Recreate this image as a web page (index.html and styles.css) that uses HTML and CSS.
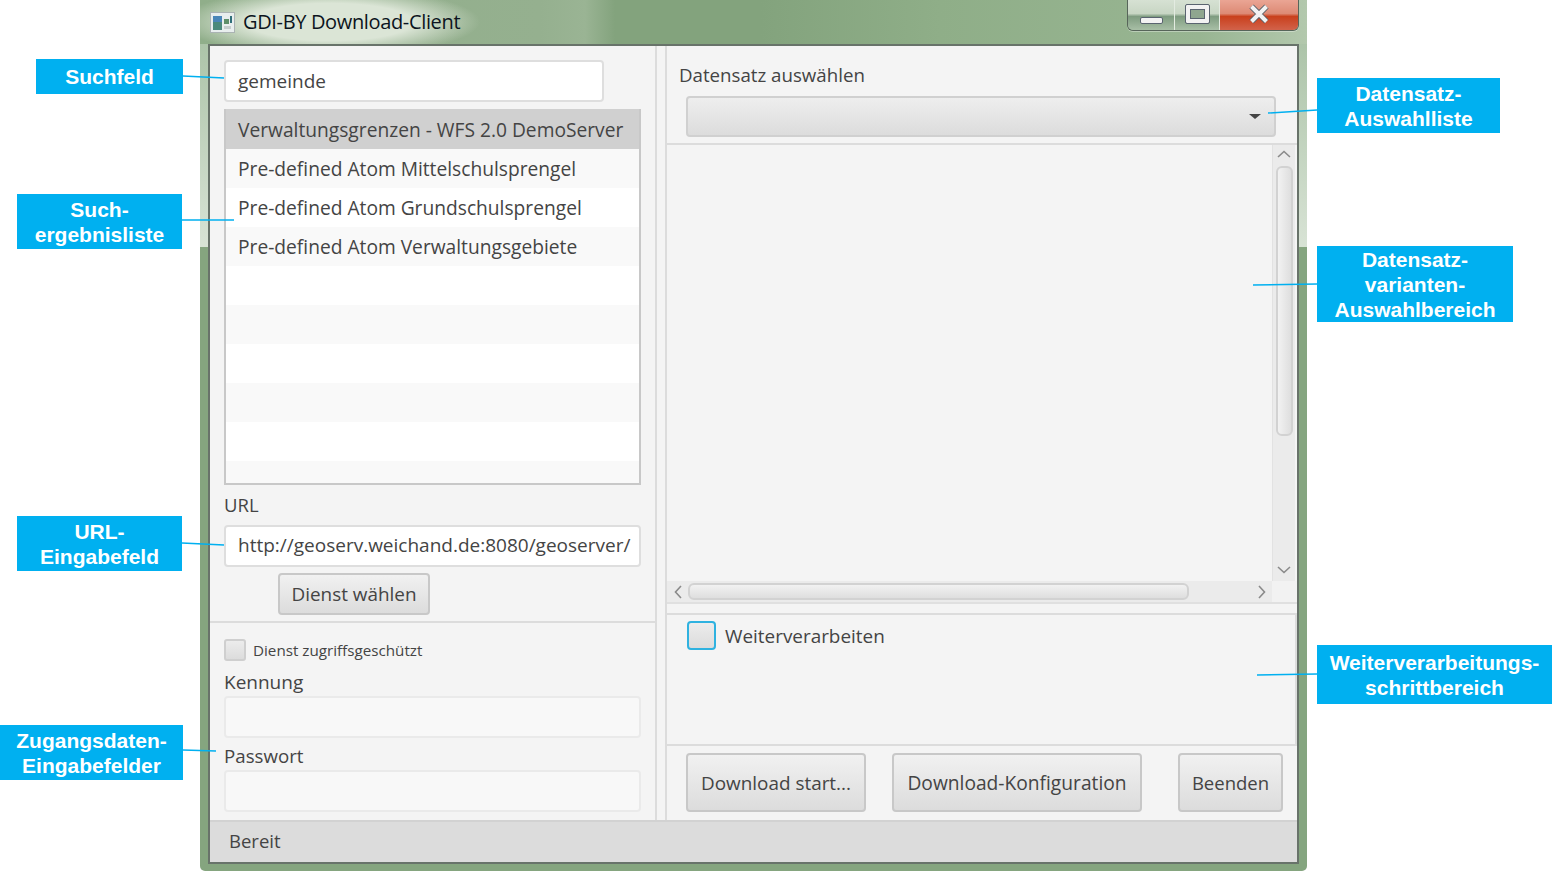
FILE: index.html
```html
<!DOCTYPE html>
<html lang="de">
<head>
  <meta charset="UTF-8">
  <title>GDI-BY Download-Client</title>
  <link rel="stylesheet" href="styles.css">
</head>
<body>

<div class="window">
  <div class="titlebar">
    <svg class="app-icon" width="25" height="21" viewBox="0 0 25 21">
      <rect x="0.5" y="0.5" width="24" height="20" fill="#e8eeee" stroke="#aab3b3"/>
      <rect x="3" y="4" width="9" height="14" fill="#4a8a7c"/>
      <rect x="3" y="4" width="9" height="6" fill="#4a86b8"/>
      <rect x="14" y="7" width="5" height="5" fill="#5d8f6a"/>
      <rect x="14" y="14" width="7" height="3" fill="#c4cdcd"/>
      <rect x="20" y="4" width="2" height="7" fill="#2f6f7a"/>
    </svg>
    <span class="title">GDI-BY Download-Client</span>
    <div class="caption-buttons">
      <div class="cap cap-min"><span class="min-glyph"></span></div>
      <div class="cap cap-max"><span class="max-glyph"></span></div>
      <div class="cap cap-close">
        <svg class="close-glyph" width="24" height="20" viewBox="0 0 24 20">
          <path d="M4.5 2.5 L12 10 L4.5 17.5 M19.5 2.5 L12 10 L19.5 17.5" fill="none" stroke="#5a6068" stroke-width="6"/>
          <path d="M4.5 2.5 L12 10 L4.5 17.5 M19.5 2.5 L12 10 L19.5 17.5" fill="none" stroke="#f2f2f2" stroke-width="4"/>
        </svg>
      </div>
    </div>
  </div>

  <div class="frame">
    <div class="panes">
      <div class="left-pane">
        <div class="left-top">
          <div class="field search-field">gemeinde</div>
          <div class="result-list">
            <div class="row selected">Verwaltungsgrenzen - WFS 2.0 DemoServer</div>
            <div class="row odd">Pre-defined Atom Mittelschulsprengel</div>
            <div class="row">Pre-defined Atom Grundschulsprengel</div>
            <div class="row odd">Pre-defined Atom Verwaltungsgebiete</div>
            <div class="row"></div>
            <div class="row odd"></div>
            <div class="row"></div>
            <div class="row odd"></div>
            <div class="row"></div>
            <div class="row odd"></div>
          </div>
          <div class="label url-label">URL</div>
          <div class="field url-field">http://geoserv.weichand.de:8080/geoserver/</div>
          <div class="btn service-btn">Dienst wählen</div>
        </div>
        <div class="left-bottom">
          <div class="check-row">
            <span class="check small"></span>
            <span class="check-label-small">Dienst zugriffsgeschützt</span>
          </div>
          <div class="label kennung-label">Kennung</div>
          <div class="field disabled"></div>
          <div class="label passwort-label">Passwort</div>
          <div class="field disabled"></div>
        </div>
      </div>

      <div class="pane-divider"></div>

      <div class="right-pane">
        <div class="label dataset-label">Datensatz auswählen</div>
        <div class="combo"><span class="combo-arrow"></span></div>
        <div class="scroll-pane">
          <div class="scroll-main">
            <div class="scroll-content"></div>
            <div class="vscroll">
              <svg class="arrow" width="14" height="8" viewBox="0 0 14 8"><path d="M1 7 L7 1.5 L13 7" fill="none" stroke="#8a8a8a" stroke-width="1.6"/></svg>
              <div class="vthumb"></div>
              <svg class="arrow arrow-end" width="14" height="8" viewBox="0 0 14 8"><path d="M1 1 L7 6.5 L13 1" fill="none" stroke="#8a8a8a" stroke-width="1.6"/></svg>
            </div>
          </div>
          <div class="hscroll">
            <svg class="arrow" width="8" height="14" viewBox="0 0 8 14"><path d="M7 1 L1.5 7 L7 13" fill="none" stroke="#8a8a8a" stroke-width="1.6"/></svg>
            <div class="hthumb"></div>
            <svg class="arrow arrow-right" width="8" height="14" viewBox="0 0 8 14"><path d="M1 1 L6.5 7 L1 13" fill="none" stroke="#8a8a8a" stroke-width="1.6"/></svg>
            <div class="corner"></div>
          </div>
        </div>
        <div class="h-divider"></div>
        <div class="process-pane">
          <span class="check focused"></span>
          <span class="process-label">Weiterverarbeiten</span>
        </div>
        <div class="actions">
          <div class="btn start-btn">Download start...</div>
          <div class="btn config-btn">Download-Konfiguration</div>
          <div class="btn quit-btn">Beenden</div>
        </div>
      </div>
    </div>
    <div class="statusbar">Bereit</div>
  </div>
</div>

<!-- annotations on top of the screenshot -->
<svg class="leaders" width="1554" height="871" viewBox="0 0 1554 871">
  <path d="M183 76 L224 78 M182 220 L234 220 M182 543 L224 545 M183 750 L216 751 M1268 113 L1317 110 M1253 285 L1317 284 M1257 675 L1317 674" stroke="#00b0f0" stroke-width="1.5" fill="none"/>
</svg>
<div class="callout c-suchfeld">Suchfeld</div>
<div class="callout c-liste">Such-<br>ergebnisliste</div>
<div class="callout c-url">URL-<br>Eingabefeld</div>
<div class="callout c-zugang">Zugangsdaten-<br>Eingabefelder</div>
<div class="callout c-auswahl">Datensatz-<br>Auswahlliste</div>
<div class="callout c-varianten">Datensatz-<br>varianten-<br>Auswahlbereich</div>
<div class="callout c-schritt">Weiterverarbeitungs-<br>schrittbereich</div>

</body>
</html>
```

FILE: styles.css
```css
* {
  box-sizing: border-box;
}
html, body {
  margin: 0;
  height: 871px;
  overflow: hidden;
}
body {
  position: relative;
  padding-left: 200px;
  background: #fff;
  font-family: "Open Sans", sans-serif;
  font-size: 18.9px;
  color: #444;
}

/* window */
.window {
  width: 1107px;
  height: 871px;
  padding: 0 8px 7px;
  border-radius: 0 0 5px 5px;
  display: flex;
  flex-direction: column;
  background: linear-gradient(to bottom, #a3bd9f, #d8e3d5) no-repeat 0 0 / 100% 247px, #85a57f;
}
.titlebar {
  height: 44px;
  flex: none;
  margin: 0 -8px;
  padding: 0 8px;
  display: flex;
  align-items: flex-start;
  background:
    radial-gradient(ellipse 150px 34px at 130px 22px, #dbe5d6 55%, rgba(219,229,214,0) 100%),
    linear-gradient(to right, #90ae8a 0, #95b08f 340px, #9ab494 385px, #83a37d 415px, #83a37d 560px, #8fae88 740px, #98b592 1000px, #b3c8ad 1107px);
}
.app-icon {
  margin: 12px 8px 0 2px;
}
.title {
  margin-top: 8px;
  font-size: 20px;
  color: #0c1420;
  letter-spacing: -0.35px;
}
.caption-buttons {
  display: flex;
  margin-left: auto;
  height: 31px;
  border: 1px solid #57655a;
  border-top: none;
  border-radius: 0 0 6px 6px;
  overflow: hidden;
  box-shadow: 0 1px 0 rgba(255,255,255,0.35);
}
.cap {
  display: flex;
  align-items: center;
  justify-content: center;
  background: linear-gradient(to bottom, #d6e1d3 0, #c8d6c4 45%, #7f9c80 55%, #a8bfa6 100%);
}
.cap-min {
  width: 47px;
  border-right: 1px solid #e3ebe1;
}
.cap-max {
  width: 45px;
  border-right: 1px solid #e3ebe1;
}
.cap-close {
  width: 78px;
  background: linear-gradient(to bottom, #eaa594 0, #dd8a75 45%, #c9401d 55%, #d2624a 100%);
}
.min-glyph {
  width: 23px;
  height: 7px;
  margin-top: 10px;
  background: #f2f2f2;
  border: 1px solid #5a6470;
  border-radius: 2px;
}
.max-glyph {
  width: 23px;
  height: 18px;
  margin-top: -2px;
  background: #8fa68f;
  border: 4px solid #f2f2f2;
  outline: 1px solid #5a6470;
  box-shadow: inset 0 0 0 1px #5a6470;
  border-radius: 1px;
}
.close-glyph {
  margin-top: -2px;
}
.frame {
  flex: 1;
  display: flex;
  flex-direction: column;
  border: 2px solid #68736a;
  background: #f4f4f4;
  min-height: 0;
}
.panes {
  flex: 1;
  display: flex;
  min-height: 0;
}

/* left side */
.left-pane {
  width: 445px;
  flex: none;
}
.left-top {
  height: 577px;
  padding: 14px 14px 0;
  border-bottom: 2px solid #dcdcdc;
}
.field {
  height: 42px;
  padding: 0 12px;
  display: flex;
  align-items: center;
  background: #fff;
  border: 2px solid #dedede;
  border-radius: 4px;
  white-space: nowrap;
  overflow: hidden;
}
.search-field {
  width: 380px;
  font-size: 19px;
}
.result-list {
  height: 376px;
  margin-top: 7px;
  border: 2px solid #c8c8c8;
  border-top: none;
  overflow: hidden;
  background: #fff;
}
.row {
  height: 39px;
  padding: 0 12px;
  line-height: 40px;
  font-size: 19.2px;
  white-space: nowrap;
  background: #fff;
}
.row.odd {
  background: #f9f9f9;
}
.row.selected {
  height: 40px;
  line-height: 41px;
  background: #d0d0d0;
}
.label {
  line-height: 26px;
}
.url-label {
  margin-top: 7px;
  font-size: 18.5px;
}
.url-field {
  margin-top: 7px;
  padding-bottom: 2px;
  font-size: 19px;
}
.btn {
  display: flex;
  align-items: center;
  justify-content: center;
  border: 2px solid #c8c8c8;
  border-radius: 4px;
  background: linear-gradient(to bottom, #f1f1f1, #dcdcdc);
  white-space: nowrap;
}
.service-btn {
  width: 152px;
  height: 42px;
  margin: 6px 0 0 54px;
}
.left-bottom {
  padding: 16px 14px 0;
}
.check-row {
  display: flex;
  align-items: center;
  gap: 7px;
}
.check {
  display: block;
  flex: none;
  border-radius: 3px;
  background: linear-gradient(to bottom, #ececec, #dcdcdc);
}
.check.small {
  width: 22px;
  height: 22px;
  border: 2px solid #cfcfcf;
}
.check-label-small {
  font-size: 15.2px;
}
.kennung-label {
  margin-top: 8px;
  font-size: 19px;
}
.passwort-label {
  margin-top: 5px;
  font-size: 18.7px;
}
.field.disabled {
  margin-top: 1px;
  background: #f8f8f8;
  border-color: #eaeaea;
}

/* divider between the panes */
.pane-divider {
  width: 12px;
  flex: none;
  background: #f4f4f4;
  border-left: 2px solid #dcdcdc;
  border-right: 2px solid #dcdcdc;
}

/* right side */
.right-pane {
  flex: 1;
  min-width: 0;
  display: flex;
  flex-direction: column;
}
.dataset-label {
  margin: 16px 0 0 12px;
  height: 34px;
  font-size: 18.7px;
}
.combo {
  width: 590px;
  height: 41px;
  margin-left: 19px;
  flex: none;
  position: relative;
  border: 2px solid #d0d0d0;
  border-radius: 4px;
  background: linear-gradient(to bottom, #eeeeee, #dcdcdc);
}
.combo-arrow {
  position: absolute;
  right: 13px;
  top: 16px;
  width: 0;
  height: 0;
  border-left: 6px solid transparent;
  border-right: 6px solid transparent;
  border-top: 5px solid #444;
}
.scroll-pane {
  height: 461px;
  margin-top: 6px;
  flex: none;
  display: flex;
  flex-direction: column;
  border-top: 2px solid #dcdcdc;
  border-bottom: 2px solid #e0e0e0;
}
.scroll-main {
  flex: 1;
  display: flex;
  min-height: 0;
}
.scroll-content {
  flex: 1;
}
.vscroll {
  width: 23px;
  margin-right: 2px;
  display: flex;
  flex-direction: column;
  align-items: center;
  background: #ebebeb;
  border-left: 1px solid #e2e2e2;
}
.arrow {
  flex: none;
  margin-top: 5px;
}
.arrow-end {
  margin-top: auto;
  margin-bottom: 7px;
}
.vthumb {
  width: 17px;
  height: 270px;
  margin-top: 8px;
  border: 2px solid #d2d2d2;
  border-radius: 6px;
  background: linear-gradient(to right, #f2f2f2, #dedede);
}
.hscroll {
  height: 21px;
  flex: none;
  display: flex;
  align-items: center;
  background: #ebebeb;
  padding-left: 7px;
}
.hscroll .arrow {
  margin-top: 0;
}
.hthumb {
  width: 501px;
  height: 17px;
  margin-left: 6px;
  border: 2px solid #d2d2d2;
  border-radius: 6px;
  background: linear-gradient(to bottom, #f2f2f2, #dedede);
}
.arrow-right {
  margin-left: 69px;
}
.corner {
  margin-left: auto;
  width: 25px;
  height: 21px;
  background: #f2f2f2;
}
.h-divider {
  height: 11px;
  flex: none;
  border-bottom: 2px solid #dcdcdc;
}
.process-pane {
  height: 131px;
  flex: none;
  display: flex;
  align-items: flex-start;
  padding: 6px 0 0 20px;
  gap: 9px;
  border-bottom: 2px solid #dcdcdc;
  border-right: 2px solid #dcdcdc;
}
.check.focused {
  width: 29px;
  height: 29px;
  border: 2px solid #2fb2e0;
  border-radius: 4px;
}
.process-label {
  line-height: 30px;
}
.actions {
  flex: 1;
  display: flex;
  align-items: flex-start;
  padding: 7px 0 0 19px;
}
.actions .btn {
  height: 59px;
}
.start-btn {
  width: 180px;
}
.config-btn {
  width: 250px;
  margin-left: 26px;
  font-size: 19.2px;
}
.quit-btn {
  width: 105px;
  margin-left: 36px;
  font-size: 18.5px;
}
.statusbar {
  height: 42px;
  flex: none;
  padding-left: 19px;
  line-height: 38px;
  font-size: 18.5px;
  background: #dcdcdc;
  border-top: 2px solid #d2d2d2;
}

/* annotations */
.leaders {
  position: absolute;
  left: 0;
  top: 0;
}
.callout {
  position: absolute;
  display: flex;
  align-items: center;
  justify-content: center;
  text-align: center;
  padding-top: 1px;
  background: #00b0f0;
  color: #fff;
  font-family: "Liberation Sans", Arial, sans-serif;
  font-weight: bold;
  font-size: 21px;
  line-height: 25px;
}
.c-suchfeld { left: 36px; top: 59px; width: 147px; height: 35px; padding-top: 0; }
.c-liste { left: 17px; top: 194px; width: 165px; height: 55px; }
.c-url { left: 17px; top: 516px; width: 165px; height: 55px; }
.c-zugang { left: 0; top: 725px; width: 183px; height: 55px; }
.c-auswahl { left: 1317px; top: 78px; width: 183px; height: 55px; padding-top: 0; }
.c-varianten { left: 1317px; top: 246px; width: 196px; height: 76px; }
.c-schritt { left: 1317px; top: 645px; width: 235px; height: 59px; padding-top: 0; }
```
